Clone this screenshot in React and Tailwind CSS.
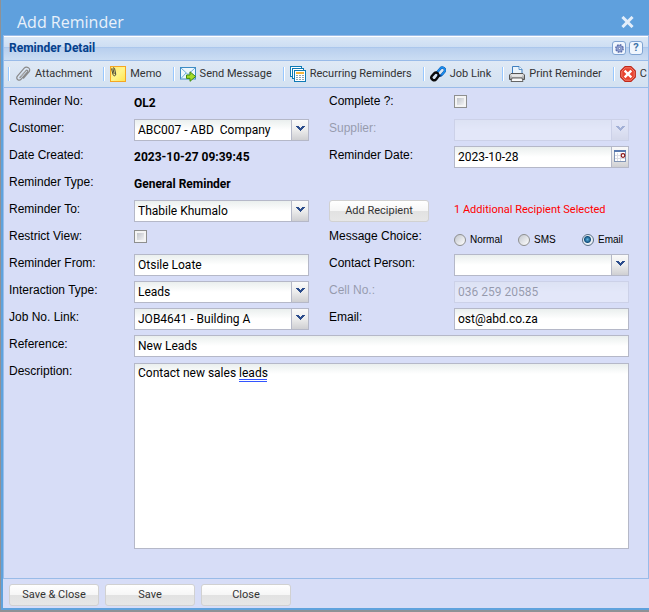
import { useState } from 'react';

const triggerBg = 'bg-linear-to-b from-[#fafafa] via-[#ececec] to-[#cfcfd2]';
const fieldBg = 'bg-white bg-[linear-gradient(#eaefee,#ffffff_10px)]';

function PaperclipIcon() {
  return (
    <svg width="16" height="16" viewBox="0 0 16 16" fill="none" strokeLinecap="round">
      <path d="M5 11.5 L11 4.6 C12 3.5 13.4 4.7 12.5 5.8 L6.2 13.2 C4.2 15.6 0.4 13 2.4 10.2 L9.2 2.2 C11.4 -0.4 16.6 2.2 14 5.8 L8.6 12.2" stroke="#8a8a8a" strokeWidth="1.2" />
      <path d="M5.6 10.2 L10 5.2" stroke="#c4c4c4" strokeWidth="0.8" />
    </svg>
  );
}

function MemoIcon() {
  return (
    <svg width="16" height="16" viewBox="0 0 16 16">
      <defs>
        <linearGradient id="memo" x1="0" y1="0" x2="1" y2="1">
          <stop offset="0" stopColor="#ffe66e" />
          <stop offset="0.5" stopColor="#fff58a" />
          <stop offset="1" stopColor="#ffe34d" />
        </linearGradient>
      </defs>
      <rect x="0.5" y="0.5" width="15" height="15" fill="url(#memo)" stroke="#f5a623" />
      <path d="M1.5 2.5 L3 8.5 C3.6 10.6 6.2 10 5.7 8 L4.6 2.6 C4.2 1.2 2.6 1.8 3 3 L4.2 8" fill="none" stroke="#4a4a3a" strokeWidth="1" />
    </svg>
  );
}

function SendIcon() {
  return (
    <svg width="16" height="16" viewBox="0 0 16 16">
      <rect x="0.5" y="1.5" width="15" height="11.5" fill="#eef7fd" stroke="#3e8cc4" />
      <path d="M1 2 L8 8.5 L15 2 M1 12.5 L6 7 M15 12.5 L10 7" fill="none" stroke="#6eaedb" />
      <path d="M6.5 9 H10 V5.8 L15.6 10.5 L10 15.3 V12.4 H6.5 Z" fill="#a5dc28" stroke="#3f8a12" strokeLinejoin="round" />
    </svg>
  );
}

function RecurringIcon() {
  return (
    <svg width="16" height="16" viewBox="0 0 16 16">
      <rect x="0.5" y="0.5" width="11" height="10" fill="#fff" stroke="#0f7ab5" />
      <rect x="2.5" y="2.5" width="11" height="10" fill="#fff" stroke="#0f7ab5" />
      <rect x="4.5" y="4.5" width="11" height="11" fill="#fff" stroke="#0f7ab5" />
      <rect x="6" y="6" width="8" height="2" fill="#f5b53c" />
      <path d="M6 9h2v1H6z M9 9h2v1H9z M12 9h2v1h-2z M6 11h2v1H6z M9 11h2v1H9z M12 11h2v1h-2z M6 13h2v1H6z M9 13h2v1H9z M12 13h2v1h-2z" fill="#8fa3b5" />
    </svg>
  );
}

function LinkIcon() {
  return (
    <svg width="16" height="16" viewBox="0 0 16 16" fill="none" strokeWidth="2.4" strokeLinecap="round">
      <path d="M7.2 6.2 L10.4 2.4 C12.4 0 16.4 3 14.4 5.7 L12 8.6 C11 9.8 9.4 9.8 8.4 9" stroke="#0b4fa0" />
      <path d="M7.2 6.2 L10.4 2.4 C12.4 0 16.4 3 14.4 5.7 L12 8.6" stroke="#1b8ff0" strokeWidth="1.6" />
      <path d="M9 9.6 L6.2 13.2 C4.2 15.8 0 13 1.7 10.2 L4.2 7.4 C5.2 6.4 6.8 6.4 7.9 7.5" stroke="#0a0a0a" />
    </svg>
  );
}

function PrinterIcon() {
  return (
    <svg width="16" height="16" viewBox="0 0 16 16">
      <defs>
        <linearGradient id="printer" x1="0" y1="0" x2="0" y2="1">
          <stop offset="0" stopColor="#f0f0f0" />
          <stop offset="1" stopColor="#8c8c8c" />
        </linearGradient>
      </defs>
      <path d="M3.5 8 V0.5 H10 L13 3.5 V8" fill="#e9f3fc" stroke="#3f7fbf" />
      <path d="M10 0.5 V3.5 H13" fill="#fff" stroke="#3f7fbf" strokeWidth="0.8" />
      <path d="M2 7.5 H14 L15.5 9 V13.5 H0.5 V9 Z" fill="url(#printer)" stroke="#555" />
      <path d="M3 12 H13 L14 15.5 H2 Z" fill="#fafafa" stroke="#666" />
      <path d="M3 10 H13" stroke="#fff" />
    </svg>
  );
}

function CancelIcon() {
  return (
    <svg width="16" height="16" viewBox="0 0 16 16">
      <path d="M5 0.7 H11 L15.3 5 V11 L11 15.3 H5 L0.7 11 V5 Z" fill="#e8432f" stroke="#c0281a" strokeWidth="1.2" strokeLinejoin="round" />
      <path d="M5.2 1.8 H10.8 L14.2 5.2 V10.8 L10.8 14.2 H5.2 L1.8 10.8 V5.2 Z" fill="none" stroke="#f58a7a" strokeWidth="0.8" />
      <path d="M5.5 5.5 L10.5 10.5 M10.5 5.5 L5.5 10.5" stroke="#fff" strokeWidth="2.4" strokeLinecap="square" />
    </svg>
  );
}

function Arrow() {
  return (
    <svg width="9" height="6" viewBox="0 0 9 6" shapeRendering="crispEdges">
      <path d="M0 0h3v1h1v1h1v-1h1v-1h3v1h-1v1h-1v1h-1v1h-1v1h-1v-1h-1v-1h-1v-1h-1v-1h-1z" fill="#2b4c8c" />
    </svg>
  );
}

function CalendarIcon() {
  return (
    <svg width="12" height="12" viewBox="0 0 12 12">
      <rect x="0.5" y="0.5" width="11" height="11" fill="#fff" stroke="#8295b5" />
      <rect x="0" y="0" width="12" height="2" fill="#5878ae" />
      <path d="M3.5 3 V11 M6.5 3 V11 M1 5.5 H8 M1 8.5 H11" stroke="#dcdce4" />
      <circle cx="9" cy="5.5" r="1.8" fill="#fff" stroke="#8c1414" strokeWidth="1.2" />
    </svg>
  );
}

function GearIcon() {
  return (
    <svg width="9" height="9" viewBox="0 0 9 9">
      <circle cx="4.5" cy="4.5" r="3.6" fill="#9fb0dc" stroke="#5b6ca8" strokeWidth="1.6" strokeDasharray="1.7 1.1" />
      <circle cx="4.5" cy="4.5" r="2.8" fill="#a9b8e2" stroke="#6577b4" strokeWidth="0.8" />
      <circle cx="4.5" cy="4.5" r="1.2" fill="#eef2ff" stroke="#50619c" strokeWidth="0.8" />
    </svg>
  );
}

const tools = [
  { label: 'Attachment', Icon: PaperclipIcon },
  { label: 'Memo', Icon: MemoIcon },
  { label: 'Send Message', Icon: SendIcon },
  { label: 'Recurring Reminders', Icon: RecurringIcon },
  { label: 'Job Link', Icon: LinkIcon },
  { label: 'Print Reminder', Icon: PrinterIcon },
  { label: 'C', Icon: CancelIcon },
];

function Label({ htmlFor, disabled, children }) {
  return (
    <label
      htmlFor={htmlFor}
      className={`h-[22px] whitespace-nowrap pt-px font-['Liberation_Sans',Arial,sans-serif] text-[12px] leading-4 text-black ${disabled ? 'opacity-30' : ''}`}
    >
      {children}
    </label>
  );
}

function TextField({ id, value, disabled, className = '' }) {
  return (
    <input
      id={id}
      type="text"
      defaultValue={value}
      disabled={disabled}
      className={`block h-[22px] w-full min-w-0 border border-[#b5b8c8] px-[3px] text-[12px] leading-4 text-black outline-none ${fieldBg} ${disabled ? 'opacity-30' : ''} ${className}`}
    />
  );
}

function SelectField({ id, value, disabled }) {
  return (
    <div className={`relative h-[22px] ${disabled ? 'opacity-30' : ''}`}>
      <select
        id={id}
        disabled={disabled}
        className={`block h-[22px] w-full appearance-none border border-[#b5b8c8] pl-[3px] pr-5 text-[12px] leading-4 text-black opacity-100 outline-none ${fieldBg}`}
      >
        <option>{value}</option>
      </select>
      <span className={`pointer-events-none absolute inset-y-px right-px flex w-[17px] justify-center border-l border-[#b5b8c8] pt-[6px] ${triggerBg}`}>
        <Arrow />
      </span>
    </div>
  );
}

function Checkbox({ id }) {
  return (
    <input
      id={id}
      type="checkbox"
      className="mt-[3px] size-[13px] appearance-none border border-[#8e8f8f] bg-linear-to-br from-[#b4b8c0] to-white shadow-[inset_0_0_0_2px_#f4f4f4] checked:bg-[#2b4c8c]"
    />
  );
}

function Value({ children }) {
  return <span className="h-[22px] whitespace-nowrap pt-[3px] text-[12px] font-bold leading-4 text-black">{children}</span>;
}

function Button({ className = '', children, ...props }) {
  return (
    <button
      type="button"
      className={`h-[22px] rounded-[3px] border border-[#d1d1d1] bg-[linear-gradient(#ffffff,#f6f6f6_48%,#e2e2e2_52%,#e7e7e7)] text-center text-[11px] leading-4 text-[#333333] ${className}`}
      {...props}
    >
      {children}
    </button>
  );
}

export default function App() {
  const [choice, setChoice] = useState('Email');

  return (
    <div className="flex min-h-screen flex-col border-b-2 border-l border-[#8f9196] bg-[#8f9196] font-['Roboto',Tahoma,sans-serif]">
      <div className="flex flex-1 flex-col border-b-2 border-l-2 border-[#5fa2dd] bg-[#d7ddf7]">
        <header className="flex h-[35px] items-end justify-between bg-[#5fa0dd] pb-px pl-[14px] pr-[15px]">
          <h1 className="font-['Open_Sans',sans-serif] text-[16px] leading-6 text-[#e9f1fa]">Add Reminder</h1>
          <button type="button" aria-label="Close window" className="mb-[6px]">
            <svg width="13" height="12" viewBox="0 0 13 12">
              <path d="M2.5 2 L10.5 10 M10.5 2 L2.5 10" stroke="#e4eefa" strokeWidth="3" strokeLinecap="square" />
            </svg>
          </button>
        </header>

        <section className="flex flex-1 flex-col border-x border-t border-[#99bbe8]">
          <div className="flex h-[25px] items-center justify-between border-b border-[#99bbe8] bg-[linear-gradient(#ffffff_1px,#dae7f6_1px,#cddef3_11px,#abc7ec_11px,#abc7ec_12px,#b8cfee_12px,#cbddf3)] pl-[5px] pr-[5px]">
            <h2 className="text-[12px] font-bold leading-4 text-[#04408c]">Reminder Detail</h2>
            <div className="flex gap-[3px]">
              <button type="button" aria-label="Settings" className="flex size-[14px] items-center justify-center rounded-[3px] border border-[#7fa3d1] bg-[#f0f6fe]">
                <GearIcon />
              </button>
              <button type="button" className="flex size-[14px] items-center justify-center rounded-[3px] border border-[#7fa3d1] bg-[#f0f6fe] text-[11px] font-bold leading-3 text-[#3f74a8]">
                ?
              </button>
            </div>
          </div>

          <div className="flex h-[27px] items-center border-b border-[#99bbe8] bg-linear-to-b from-[#dfe9f5] to-[#d3e1f1] pl-1">
            {tools.map(({ label, Icon }) => (
              <div key={label} className="group flex shrink-0 items-center">
                <span className="h-[14px] w-[2px] border-l border-r border-l-[#98c8ff] border-r-white" />
                <button type="button" className="flex items-center gap-1 whitespace-nowrap pl-[5px] pr-[11px] text-[11px] leading-4 text-[#333333] group-last:pr-0">
                  <Icon />
                  {label}
                </button>
              </div>
            ))}
          </div>

          <form className="flex flex-1 flex-col border-b border-[#99bbe8] pl-[5px] pr-[19px] pt-1">
            <div className="grid grid-cols-[105px_minmax(0,1fr)_105px_minmax(0,1fr)] gap-x-5 gap-y-[5px]">
              <Label>Reminder No:</Label>
              <Value>OL2</Value>
              <Label htmlFor="complete">Complete ?:</Label>
              <Checkbox id="complete" />

              <Label htmlFor="customer">Customer:</Label>
              <SelectField id="customer" value={'ABC007 - ABD \u00a0Company'} />
              <Label htmlFor="supplier" disabled>Supplier:</Label>
              <SelectField id="supplier" value="" disabled />

              <Label>Date Created:</Label>
              <Value>2023-10-27 09:39:45</Value>
              <Label htmlFor="date">Reminder Date:</Label>
              <div className="relative">
                <TextField id="date" value="2023-10-28" />
                <button type="button" aria-label="Pick date" className={`absolute inset-y-px right-px flex w-[17px] justify-center border-l border-[#b5b8c8] pt-[3px] ${triggerBg}`}>
                  <CalendarIcon />
                </button>
              </div>

              <Label>Reminder Type:</Label>
              <Value>General Reminder</Value>
              <span />
              <span />

              <Label htmlFor="to">Reminder To:</Label>
              <SelectField id="to" value="Thabile Khumalo" />
              <Button className="w-[100px]">Add Recipient</Button>
              <span className="whitespace-nowrap pt-[2px] text-[11px] leading-4 text-[#ff0000]">1 Additional Recipient Selected</span>

              <Label htmlFor="restrict">Restrict View:</Label>
              <Checkbox id="restrict" />
              <Label>Message Choice:</Label>
              <div className="flex h-[22px] pt-1">
                {['Normal', 'SMS', 'Email'].map((name) => (
                  <label key={name} className="flex w-16 items-center gap-1 font-['Liberation_Sans',Arial,sans-serif] text-[10px] leading-4 text-black last:w-auto">
                    <input
                      type="radio"
                      name="choice"
                      checked={choice === name}
                      onChange={() => setChoice(name)}
                      className="size-3 appearance-none rounded-full border border-[#8e8f8f] bg-linear-to-br from-[#c3c7ce] to-white checked:border-[#5a6f85] checked:bg-[radial-gradient(circle_at_45%_45%,#5fb4e0_0,#12507e_3px,#e8eef4_4px)]"
                    />
                    {name}
                  </label>
                ))}
              </div>

              <Label htmlFor="from">Reminder From:</Label>
              <TextField id="from" value="Otsile Loate" />
              <Label htmlFor="contact">Contact Person:</Label>
              <SelectField id="contact" value="" />

              <Label htmlFor="interaction">Interaction Type:</Label>
              <SelectField id="interaction" value="Leads" />
              <Label htmlFor="cell" disabled>Cell No.:</Label>
              <TextField id="cell" value="036 259 20585" disabled />

              <Label htmlFor="job">Job No. Link:</Label>
              <SelectField id="job" value="JOB4641 - Building A" />
              <Label htmlFor="email">Email:</Label>
              <TextField id="email" value="ost@abd.co.za" />

              <Label htmlFor="reference">Reference:</Label>
              <TextField id="reference" value="New Leads" className="col-span-3" />
            </div>

            <div className="mb-[29px] mt-[5px] grid flex-1 grid-cols-[105px_minmax(0,1fr)] gap-x-5">
              <Label htmlFor="description">Description:</Label>
              <div className="relative mt-px flex">
                <textarea
                  id="description"
                  spellCheck={false}
                  defaultValue="Contact new sales leads"
                  className={`w-full resize-none border border-[#b5b8c8] px-[3px] py-px text-[12px] leading-4 text-black outline-none ${fieldBg}`}
                />
                <span className="pointer-events-none absolute left-[105px] top-4 w-7 border-b-3 border-double border-[#3355ff]" />
              </div>
            </div>
          </form>
        </section>

        <footer className="flex h-[29px] items-center gap-[6px] pl-[6px] pt-[3px]">
          <Button className="w-[90px]">Save &amp; Close</Button>
          <Button className="w-[90px]">Save</Button>
          <Button className="w-[90px]">Close</Button>
        </footer>
      </div>
    </div>
  );
}
